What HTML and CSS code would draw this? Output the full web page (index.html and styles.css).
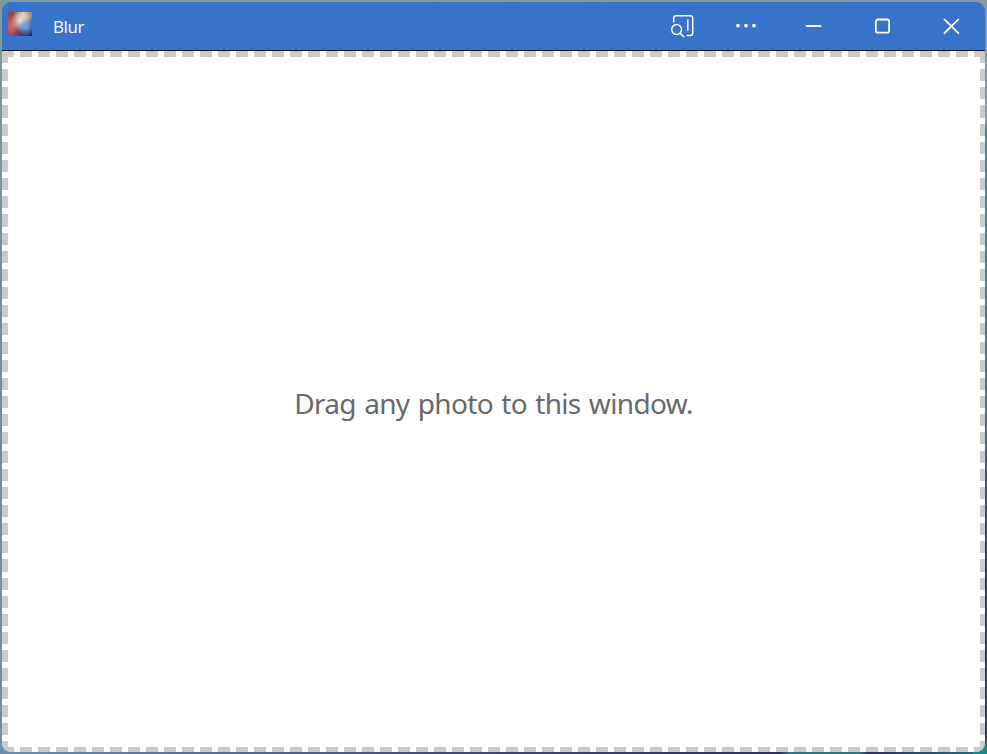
FILE: index.html
```html
<!DOCTYPE html>
<html lang="en">
<head>
<meta charset="utf-8">
<title>Blur</title>
<link rel="stylesheet" href="styles.css">
</head>
<body>
<div class="window">
  <header class="titlebar">
    <span class="app-icon"></span>
    <h1 class="title">Blur</h1>
    <nav class="controls">
      <button class="control search" aria-label="Find"><svg width="26" height="26" viewBox="0 0 26 26"><path d="M3.7 9V5.2Q3.7 2.7 6.2 2.7H20.2Q22.7 2.7 22.7 5.2V19.9Q22.7 22.4 20.2 22.4H17M17.8 7V17.5"/><circle cx="6.6" cy="16.5" r="4.9"/><path d="M10.2 20.1L13.8 23.7"/></svg></button>
      <button class="control more" aria-label="More"><svg width="26" height="26" viewBox="0 0 26 26"><g class="dots"><circle cx="5" cy="12.6" r="1.9"/><circle cx="13" cy="12.6" r="1.9"/><circle cx="21" cy="12.6" r="1.9"/></g></svg></button>
      <button class="control minimize" aria-label="Minimize"><svg width="26" height="26" viewBox="0 0 26 26"><path class="bold" d="M5.5 13H19.5"/></svg></button>
      <button class="control" aria-label="Maximize"><svg width="26" height="26" viewBox="0 0 26 26"><rect class="bold" x="6.9" y="6.5" width="13.2" height="13.2" rx="2"/></svg></button>
      <button class="control" aria-label="Close"><svg width="26" height="26" viewBox="0 0 26 26"><path class="bold" d="M6.4 6.4L20.4 20.2M20.4 6.4L6.4 20.2"/></svg></button>
    </nav>
  </header>
  <main class="dropzone"><p class="hint">Drag any photo to this window.</p></main>
</div>
</body>
</html>
```

FILE: styles.css
```css
* { box-sizing: border-box; }
body {
  margin: 0;
  width: 987px;
  height: 754px;
  padding: 2px;
  overflow: hidden;
  font-family: "Open Sans", "Noto Sans", sans-serif;
  background:
    linear-gradient(#8899a0 0 120px, #3a8ca6 130px 190px, #3d7c9b 400px, #34386f 560px 740px, #168a83 746px) right / 14px 100% no-repeat,
    linear-gradient(90deg, #6d8ead, #424b78 45%, #30305f 79%, #34767f 80%, #34767f 87%, #30305f 88%, #267078) bottom / 100% 14px no-repeat,
    linear-gradient(90deg, #7c9c9c, #8a9a96 60%, #839fa8) top / 100% 14px no-repeat,
    linear-gradient(#7c9c9c, #74899a 50%, #6d8ead);
}
.window {
  width: 983px;
  height: 750px;
  display: flex;
  flex-direction: column;
  border-radius: 9px;
  overflow: hidden;
}
.titlebar {
  flex: 0 0 49px;
  display: flex;
  align-items: center;
  padding-left: 6px;
  color: #fff;
  background: #3773ca;
  border-bottom: 1px solid #080c18;
}
.app-icon {
  width: 24px;
  height: 24px;
  margin-top: -4px;
  background:
    radial-gradient(circle at 74% 62%, #58aee8 0, #58aee800 38%),
    radial-gradient(circle at 54% 38%, #f3e6d6 0, #f3e6d600 52%),
    radial-gradient(circle at 65% 8%, #f0d8a8 0, #f0d8a800 40%),
    radial-gradient(circle at 100% 100%, #1c2470 0, #1c247000 60%),
    radial-gradient(circle at 15% 60%, #cf6a66 0, #cf6a6600 50%),
    linear-gradient(100deg, #954450, #83405f 50%, #77818e);
}
.title {
  margin: 1px 0 0 21px;
  font-size: 17px;
  font-weight: 400;
  letter-spacing: -0.4px;
  line-height: 24px;
}
.controls {
  display: flex;
  height: 100%;
  margin-left: auto;
}
.control {
  width: 69px;
  padding: 0;
  border: 0;
  display: flex;
  align-items: center;
  justify-content: center;
  background: none;
  color: inherit;
}
.search { width: 58px; }
.more { width: 68px; }
.minimize { width: 67px; }
.control svg {
  fill: none;
  stroke: currentColor;
  stroke-width: 1.5;
  stroke-linecap: round;
}
.control .bold { stroke-width: 1.8; }
.control .dots { fill: currentColor; stroke: none; }
.dropzone {
  --dash: #cbcbcb;
  flex: 1;
  display: flex;
  align-items: center;
  justify-content: center;
  background:
    repeating-linear-gradient(90deg, var(--dash) 0 12px, #fff 12px 18px) 0 0 / 100% 6px no-repeat,
    repeating-linear-gradient(90deg, var(--dash) 0 12px, #fff 12px 18px) 0 100% / 100% 5px no-repeat,
    repeating-linear-gradient(var(--dash) 0 12.1px, #fff 12.1px 18.16px) 0 0 / 6px 100% no-repeat,
    repeating-linear-gradient(var(--dash) 0 12.1px, #fff 12.1px 18.16px) 100% 0 / 5px 100% no-repeat,
    #fff;
}
.hint {
  margin: 3px 0 0;
  font-family: "Noto Sans", sans-serif;
  font-size: 28px;
  line-height: 40px;
  letter-spacing: -0.65px;
  word-spacing: 1.6px;
  color: #696969;
  white-space: nowrap;
}
```
